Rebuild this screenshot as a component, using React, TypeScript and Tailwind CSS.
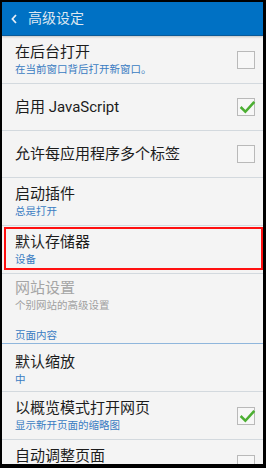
import React from "react";

const font = { fontFamily: '"Roboto", "Noto Sans CJK SC", sans-serif' };

type Row = {
  title: string;
  sub?: string;
  check?: boolean | null;
  tall?: boolean;
  low?: boolean;
  highlight?: boolean;
};

function CheckBox({ on }: { on: boolean }) {
  return (
    <div className="relative w-[18px] h-[18px] border border-[#b9b9b9] bg-[#f7f7f7] shrink-0">
      {on && (
        <svg viewBox="0 0 20 20" className="absolute left-[1px] top-[0px] w-[17px] h-[17px]">
          <path d="M3 10.5 L7.5 15 L17 4.5" fill="none" stroke="#4caf32" strokeWidth="3" strokeLinecap="square" />
        </svg>
      )}
    </div>
  );
}

function SettingRow({ row }: { row: Row }) {
  const twoLine = row.sub || row.tall;
  return (
    <div
      className={`relative shrink-0 flex items-center pl-[13px] pr-[8px] border-b border-[#d3d9de] ${
        twoLine ? "h-[48px]" : "h-[47px]"
      } ${row.low ? "pt-[4px]" : ""}`}
    >
      <div className={`flex-1 min-w-0 ${row.tall && !row.sub ? "pb-[15px]" : ""}`}>
        <div className="text-[15px] leading-[19px] text-[#1c1c1c]">{row.title}</div>
        {row.sub && <div className="text-[10.5px] leading-[15px] text-[#3a7cc2]">{row.sub}</div>}
      </div>
      {row.check != null && <CheckBox on={row.check} />}
      {row.highlight && (
        <div className="absolute left-[2px] right-[0px] top-[1px] bottom-[3px] border-2 border-[#ff1010]" />
      )}
    </div>
  );
}

const first: Row[] = [
  { title: "在后台打开", sub: "在当前窗口背后打开新窗口。", check: false },
  { title: "启用 JavaScript", check: true },
  { title: "允许每应用程序多个标签", check: false },
  { title: "启动插件", sub: "总是打开" },
  { title: "默认存储器", sub: "设备", highlight: true },
];

const second: Row[] = [
  { title: "默认缩放", sub: "中", low: true },
  { title: "以概览模式打开网页", sub: "显示新开页面的缩略图", check: true },
  { title: "自动调整页面", check: false, tall: true },
];

export default function App() {
  return (
    <div className="w-[266px] h-[468px] bg-black pt-[2px] pl-[2px] pr-[3px] pb-[4px]" style={font}>
      <div className="w-full h-full bg-[#f4f4f4] overflow-hidden flex flex-col">
        <div className="h-[34px] shrink-0 bg-[#0071c4] border-b border-[#0a5a98] flex items-center pl-[8px] gap-[10px] shadow-[0_1px_2px_rgba(0,0,0,0.2)]">
          <svg viewBox="0 0 10 14" className="w-[8px] h-[12px]">
            <path d="M7.5 2 L3 7 L7.5 12" fill="none" stroke="#e8eef5" strokeWidth="2.2" />
          </svg>
          <span className="text-[14px] text-[#dde7f1]">高级设定</span>
        </div>
        {first.map((r) => (
          <SettingRow key={r.title} row={r} />
        ))}
        <div className="h-[47px] shrink-0 pt-[5px] pl-[13px]">
          <div className="text-[15px] leading-[19px] text-[#a5a5a5]">网站设置</div>
          <div className="text-[10.5px] leading-[15px] text-[#a0a0a0]">个别网站的高级设置</div>
        </div>
        <div className="h-[23px] shrink-0 pt-[8px] pl-[13px] border-b border-[#8fb6dc]">
          <div className="text-[10.5px] leading-[14px] text-[#3a7cc2]">页面内容</div>
        </div>
        {second.map((r) => (
          <SettingRow key={r.title} row={r} />
        ))}
      </div>
    </div>
  );
}
